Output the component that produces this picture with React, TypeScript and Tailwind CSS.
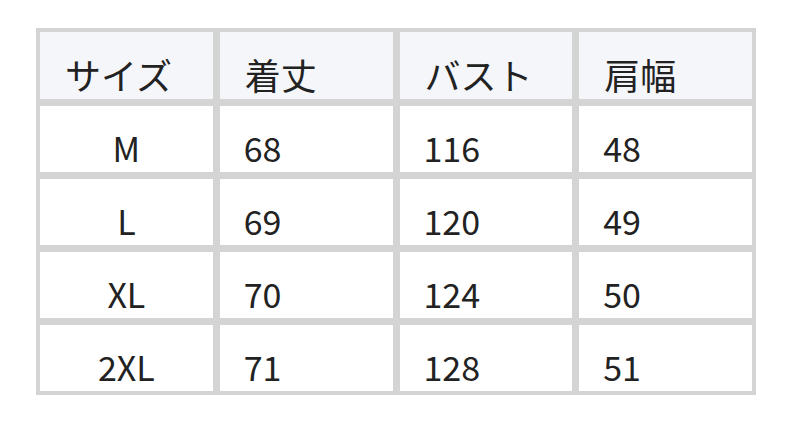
const HEADERS = ['サイズ', '着丈', 'バスト', '肩幅'];

const ROWS = [
  ['M', '68', '116', '48'],
  ['L', '69', '120', '49'],
  ['XL', '70', '124', '50'],
  ['2XL', '71', '128', '51'],
];

export default function App() {
  return (
    <div
      className="h-[422px] w-[792px] bg-white pl-[36px] pt-[28px] text-[#222222]"
      style={{ fontFamily: '"Noto Sans CJK JP", "Noto Sans", sans-serif' }}
    >
      <div className="grid w-[720px] grid-cols-4 grid-rows-[67px_66px_66px_66px_66px] gap-[7px] bg-[#d4d4d4] p-[4px] text-[34px] leading-[41px]">
        {HEADERS.map((h) => (
          <div key={h} className="bg-[#f5f6fa] pl-[25px] pt-[22px] text-[36px]">
            {h}
          </div>
        ))}
        {ROWS.map((row) =>
          row.map((cell, i) => (
            <div
              key={row[0] + i}
              className={i === 0 ? 'bg-white pt-[21px] text-center' : 'bg-white pl-[24px] pt-[21px]'}
            >
              {cell}
            </div>
          )),
        )}
      </div>
    </div>
  );
}
